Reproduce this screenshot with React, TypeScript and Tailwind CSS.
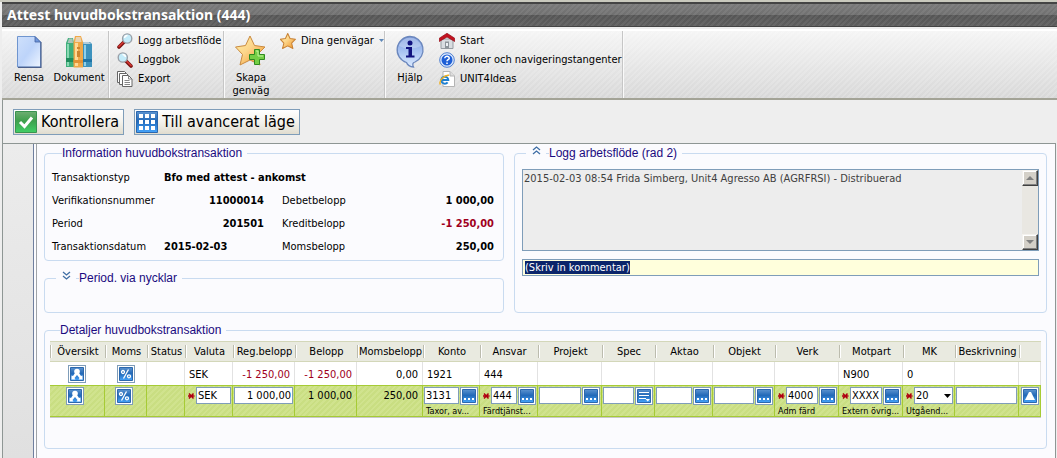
import { useEffect, useRef, type ReactNode } from "react";

/* ---------- Icons ---------- */

const PageIcon = () => (
  <svg width="26" height="34" viewBox="0 0 26 34">
    <defs>
      <linearGradient id="page" x1="0" y1="0" x2="1" y2="1">
        <stop offset="0" stopColor="#cfe0fb" />
        <stop offset="0.5" stopColor="#bdd4fa" />
        <stop offset="1" stopColor="#eef5ff" />
      </linearGradient>
    </defs>
    <path d="M1.5 1.5H19L24.500 7V32H1.500Z" fill="url(#page)" stroke="#6f95cf" />
    <path d="M2 32.300H25V7" fill="none" stroke="#4a5f8c" strokeWidth="1.200" />
    <path d="M19 1.500V7H24.500Z" fill="#6f97dc" stroke="#44639f" strokeWidth="0.800" />
  </svg>
);

const BooksIcon = () => (
  <svg width="28" height="34" viewBox="0 0 28 34">
    <path d="M1 8L3 3H8L9 8V32H1Z" fill="#3fae7c" />
    <path d="M2.500 8L4 3.500H7.500L8 8Z" fill="#a9c4ba" />
    <path d="M2 9H4V31H2Z" fill="#8ad9b3" />
    <path d="M1 23H9V27H1Z" fill="#1f8c5c" />
    <path d="M18 8L19 7H25L27 9V32H18Z" fill="#3d92bd" />
    <path d="M18 9L19 7H24L26 9Z" fill="#b5ccd8" />
    <path d="M19 10H21V31H19Z" fill="#8fd0ea" />
    <path d="M18 24H27V27H18Z" fill="#1f74a6" />
    <path d="M8.500 7L10 1H16L18 7V32.500H8.500Z" fill="#f0a848" />
    <path d="M10 7L11 2H15.500L16.500 7Z" fill="#e9d3b1" />
    <path d="M10 8H13V31H10Z" fill="#ffd995" />
    <path d="M12 12H15V14H12ZM12 16H15V22H12Z" fill="#cf8530" />
    <path d="M8.500 25H18V28H8.500Z" fill="#e29236" />
  </svg>
);

const LensIcon = ({ flipped = false }: { flipped?: boolean }) => (
  <svg width="16" height="16" viewBox="0 0 16 16">
    <g transform={flipped ? "translate(16 0) scale(-1 1)" : undefined}>
      <path d="M7 9L2 14" stroke="#7c1412" strokeWidth="3.600" strokeLinecap="round" />
      <path d="M6 9.500L2 13.500" stroke="#d83a34" strokeWidth="1.600" strokeLinecap="round" />
      <circle cx="10.200" cy="5.500" r="4.600" fill="#c4ecfa" stroke="#9aa0a8" strokeWidth="1.400" />
      <path d="M7.500 5A3 3 0 0 1 10.500 2.500" stroke="#fff" strokeWidth="1.500" fill="none" />
    </g>
  </svg>
);

const CopyIcon = () => (
  <svg width="16" height="16" viewBox="0 0 16 16" stroke="#666" fill="#fff">
    <path d="M0.500 0.500H7.500L9.500 2.500V11.500H0.500Z" />
    <path d="M2.500 2.500H9.500L11.500 4.500V13.500H2.500Z" />
    <path d="M5.500 4.500H11.500L15 8V15.500H5.500Z" />
    <path d="M11.500 4.500V8H15M7.500 9.500H12.500M7.500 11.500H13M7.500 13.500H13" stroke="#888" fill="none" />
  </svg>
);

const starPath = "M15 1L19.500 10.500L30 12L22.500 19.500L25 30L15 25L5 30L7.500 19.500L0.500 12L10.500 10.500Z";

const StarDefs = () => (
  <defs>
    <linearGradient id="star" x1="0" y1="0" x2="1" y2="1">
      <stop offset="0" stopColor="#fff0a8" />
      <stop offset="0.450" stopColor="#fcd58a" />
      <stop offset="1" stopColor="#ef8e1c" />
    </linearGradient>
  </defs>
);

const StarPlusIcon = () => (
  <svg width="32" height="32" viewBox="0 0 32 32">
    <StarDefs />
    <path d={starPath} fill="url(#star)" stroke="#c98a40" strokeLinejoin="round" />
    <path d="M19.500 14.500H24.500V19.500H29.500V24.500H24.500V29.500H19.500V24.500H14.500V19.500H19.500Z" fill="#74cf45" stroke="#2f8a20" />
    <path d="M21 16H23V21H28" stroke="#c2f59e" fill="none" />
  </svg>
);

const StarIcon = () => (
  <svg width="16" height="16" viewBox="0 0 31 31">
    <path d={starPath} fill="url(#star)" stroke="#c98235" strokeWidth="2" strokeLinejoin="round" />
  </svg>
);

const InfoIcon = () => (
  <svg width="30" height="34" viewBox="0 0 30 34">
    <defs>
      <linearGradient id="info" x1="0" y1="0" x2="0" y2="1">
        <stop offset="0" stopColor="#7d9bdd" />
        <stop offset="0.500" stopColor="#a9c4f2" />
        <stop offset="1" stopColor="#dcebff" />
      </linearGradient>
    </defs>
    <path d="M15 1.500A13.300 13.300 0 0 1 20 27Q16.500 28 18.500 32Q13 31.500 11.500 27.500A13.300 13.300 0 0 1 15 1.500Z" fill="url(#info)" stroke="#6b87bd" strokeWidth="1.300" />
    <path d="M4 11A11.500 11.500 0 0 1 26 11Q15 16 4 11Z" fill="#fff" opacity="0.250" />
    <circle cx="15" cy="8" r="2.500" fill="#11127f" />
    <path d="M11 12H17V20.500H19.500V22.500H11V20.500H13.500V14H11Z" fill="#11127f" />
  </svg>
);

const HouseIcon = () => (
  <svg width="16" height="16" viewBox="0 0 16 16">
    <path d="M2 6H14V15.500H2Z" fill="#d9dde1" stroke="#979da3" />
    <path d="M6 8.500H10V15.500H6Z" fill="#8e959b" />
    <path d="M7 10H9V13H7Z" fill="#eef2f5" />
    <path d="M8 0.300L15.700 5.200V8.500L8 4L0.300 8.500V5.200Z" fill="#c41220" stroke="#8f0b16" strokeWidth="0.700" />
  </svg>
);

const QuestionIcon = () => (
  <svg width="16" height="16" viewBox="0 0 16 16">
    <circle cx="8" cy="8" r="7.300" fill="#dce9fd" stroke="#4f7fd0" />
    <circle cx="8" cy="8" r="5.500" fill="#1e5fd6" />
    <path d="M5.800 6.300C5.800 3.500 10.500 3.700 10.200 6.300C10 7.700 8 7.700 8 9.300M8 10.500V12" stroke="#fff" strokeWidth="1.500" fill="none" />
  </svg>
);

const BrowserIcon = () => (
  <svg width="16" height="16" viewBox="0 0 16 16">
    <path d="M4 0.500H11L15.500 5V15.500H4Z" fill="#fff" stroke="#b4b4b4" />
    <path d="M11 0.500V5H15.500" fill="#ddd" stroke="#b4b4b4" />
    <path d="M2.500 9H9.300A3.500 3.500 0 1 0 8.600 11.300" stroke="#1c7fd0" strokeWidth="2" fill="none" />
    <path d="M1.500 13.500C-1 10 6 3.500 10 4.300" stroke="#f0b020" strokeWidth="1.400" fill="none" />
  </svg>
);

const CheckIcon = () => (
  <svg width="22" height="22" viewBox="0 0 22 22">
    <defs>
      <linearGradient id="check" x1="0" y1="0" x2="0" y2="1">
        <stop offset="0" stopColor="#6fae74" />
        <stop offset="0.450" stopColor="#3ea04c" />
        <stop offset="1" stopColor="#41cf66" />
      </linearGradient>
    </defs>
    <path d="M0.500 0.500H21.500V21.500H0.500Z" fill="url(#check)" stroke="#3a9350" />
    <path d="M5 11L9.500 15.500L17 6.500" stroke="#fff" strokeWidth="3" fill="none" />
  </svg>
);

const BlueDefs = () => (
  <defs>
    <linearGradient id="blue" x1="0" y1="0" x2="0" y2="1">
      <stop offset="0" stopColor="#5c93cf" />
      <stop offset="0.450" stopColor="#2269b8" />
      <stop offset="1" stopColor="#45a4fb" />
    </linearGradient>
  </defs>
);

const GridIcon = () => (
  <svg width="22" height="22" viewBox="0 0 22 22">
    <BlueDefs />
    <path d="M0.500 0.500H21.500V21.500H0.500Z" fill="url(#blue)" stroke="#2b66ad" />
    <path d="M3 3H7V7H3ZM9 3H13V7H9ZM15 3H19V7H15ZM3 9H7V13H3ZM9 9H13V13H9ZM15 9H19V13H15ZM3 15H7V19H3ZM9 15H13V19H9ZM15 15H19V19H15Z" fill="#fff" />
  </svg>
);

type Glyph = "people" | "percent" | "dots" | "list" | "up";

const glyphs: Record<Glyph, ReactNode> = {
  people: (
    <g fill="#fff">
      <circle cx="7" cy="4.500" r="2.800" />
      <path d="M5 6H9L11 9L12.500 8.500V12.500H8.500L9.500 11L7 8L4.500 11L5.500 12.500H1.500V8.500L3 9Z" />
    </g>
  ),
  percent: (
    <g stroke="#fff" strokeWidth="1.300" fill="none">
      <circle cx="4" cy="5" r="1.500" />
      <circle cx="10" cy="9.300" r="1.500" />
      <path d="M9.500 2.500L4.500 11.500" />
    </g>
  ),
  dots: <path d="M2 9H4V11H2ZM6 9H8V11H6ZM10 9H12V11H10Z" fill="#fff" />,
  list: <path d="M2 3H12V4H2ZM2 6H12V7H2ZM2 9H9V10H2ZM8.500 10H13L10.750 12.500Z" fill="#fff" />,
  up: <path d="M6 3H8L12 11H2Z" fill="#fff" />,
};

const DoubleChevron = ({ up = false }: { up?: boolean }) => (
  <svg width="9" height="9" viewBox="0 0 9 9" stroke="#3f6ea5" strokeWidth="1.300" fill="none">
    {up ? <path d="M1 4L4.500 1L8 4M1 8L4.500 5L8 8" /> : <path d="M1 1L4.500 4L8 1M1 5L4.500 8L8 5" />}
  </svg>
);

/* ---------- Building blocks ---------- */

function SmallButton({ glyph, label }: { glyph: Glyph; label: string }) {
  return (
    <button type="button" aria-label={label} className="block size-[18px] shrink-0 border border-[#7f9db9] bg-white p-px">
      <svg className="block size-[14px]" viewBox="0 0 14 14">
        <path d="M0.500 0.500H13.500V13.500H0.500Z" fill="url(#blue)" stroke="#2c68ad" />
        {glyphs[glyph]}
      </svg>
    </button>
  );
}

function RibbonGroup({ children, className = "" }: { children: ReactNode; className?: string }) {
  return (
    <div className={`flex items-start border-r border-[#c6c6c6] shadow-[1px_0_0_#fafafa] ${className}`}>{children}</div>
  );
}

function BigButton({ icon, children }: { icon: ReactNode; children: ReactNode }) {
  return (
    <button type="button" className="flex w-[50px] flex-col items-center pt-1 leading-[13px]">
      <span className="flex h-[36px] items-start">{icon}</span>
      {children}
    </button>
  );
}

function RibbonLink({ icon, children }: { icon: ReactNode; children: ReactNode }) {
  return (
    <a href="#" className="flex h-[19px] items-center gap-[5px] whitespace-nowrap">
      {icon}
      {children}
    </a>
  );
}

function ActionButton({ icon, children }: { icon: ReactNode; children: ReactNode }) {
  return (
    <button
      type="button"
      className="flex h-[26px] items-center gap-1 border border-[#7f9db9] bg-gradient-to-b from-white via-[#f4f2ec] to-[#e0dccf] pr-1 pl-px text-[16px] whitespace-nowrap"
    >
      {icon}
      {children}
    </button>
  );
}

function Panel({
  title,
  toggle,
  className = "",
  children,
}: {
  title: string;
  toggle?: "up" | "down";
  className?: string;
  children?: ReactNode;
}) {
  return (
    <fieldset className={`min-w-0 rounded-[4px] border border-[#c9dbf0] ${className}`}>
      <legend
        className={`h-[15px] pr-[5px] font-['Liberation_Sans',sans-serif] text-[12px] leading-[15px] text-[#1a0a80] ${toggle ? "ml-1" : "ml-[10px]"}`}
      >
        <span className="flex items-center">
          {toggle && (
            <>
              <button
                type="button"
                aria-label={toggle === "up" ? "Fäll ihop" : "Fäll ut"}
                className="flex h-[15px] w-5 items-start justify-center"
              >
                <DoubleChevron up={toggle === "up"} />
              </button>
              <span className="h-px w-[3px] bg-[#c9dbf0]" />
            </>
          )}
          {title}
        </span>
      </legend>
      {children}
    </fieldset>
  );
}

const Value = ({ children, negative = false }: { children: ReactNode; negative?: boolean }) => (
  <output className={`text-right font-bold ${negative ? "text-[#a0001c]" : ""}`}>{children}</output>
);

/* ---------- Detail table ---------- */

type Column = {
  name: string;
  col: string;
  first?: string;
  negative?: boolean;
  number?: boolean;
  value?: string;
  kind: "icon" | "empty" | "text" | "input" | "select" | "end";
  glyph?: Glyph;
  required?: boolean;
  note?: string;
};

const columns: Column[] = [
  { name: "Översikt", col: "w-[55px]", kind: "icon", glyph: "people" },
  { name: "Moms", col: "w-[42px]", kind: "icon", glyph: "percent" },
  { name: "Status", col: "w-[38px]", kind: "empty" },
  { name: "Valuta", col: "w-[48px]", first: "SEK", kind: "input", value: "SEK", required: true },
  { name: "Reg.belopp", col: "w-[62px]", first: "-1 250,00", negative: true, number: true, kind: "input", value: "1 000,00" },
  { name: "Belopp", col: "w-[62px]", first: "-1 250,00", negative: true, number: true, kind: "text", value: "1 000,00" },
  { name: "Momsbelopp", col: "w-[66px]", first: "0,00", number: true, kind: "text", value: "250,00" },
  { name: "Konto", col: "w-[57px]", first: "1921", kind: "input", value: "3131", glyph: "dots", note: "Taxor, av..." },
  { name: "Ansvar", col: "w-[58px]", first: "444", kind: "input", value: "444", glyph: "dots", required: true, note: "Färdtjänst..." },
  { name: "Projekt", col: "w-[64px]", kind: "input", glyph: "dots" },
  { name: "Spec", col: "w-[53px]", kind: "input", glyph: "list" },
  { name: "Aktao", col: "w-[58px]", kind: "input", glyph: "dots" },
  { name: "Objekt", col: "w-[62px]", kind: "input", glyph: "dots" },
  { name: "Verk", col: "w-[64px]", kind: "input", value: "4000", glyph: "dots", required: true, note: "Adm färd" },
  { name: "Motpart", col: "w-[64px]", first: "N900", kind: "input", value: "XXXX", glyph: "dots", required: true, note: "Extern övrig..." },
  { name: "MK", col: "w-[52px]", first: "0", kind: "select", value: "20", required: true, note: "Utgåend..." },
  { name: "Beskrivning", col: "w-[64px]", kind: "input" },
  { name: "", col: "w-[22px]", kind: "end", glyph: "up" },
];

const Required = () => (
  <svg className="w-[9px] shrink-0 self-center" height="8" viewBox="0 0 9 8" stroke="#b00010" strokeWidth="1.500">
    <path d="M2 4H8.500M3 1.500L7.500 6.500M7.500 1.500L3 6.500" />
  </svg>
);

function EditCell({ column }: { column: Column }) {
  const { kind, glyph, name, value = "", number } = column;
  if (kind === "icon") {
    return (
      <div className="flex justify-center pr-1">
        <SmallButton glyph={glyph!} label={name} />
      </div>
    );
  }
  if (kind === "end") {
    return (
      <div className="flex justify-center">
        <SmallButton glyph="up" label="Stäng rad" />
      </div>
    );
  }
  if (kind === "empty") return null;
  if (kind === "text") return <div className="pr-1 text-right leading-[18px]">{value}</div>;
  return (
    <>
      <div className="flex h-[18px] items-start gap-px px-px">
        {column.required && <Required />}
        {kind === "select" ? (
          <span className="relative min-w-0 flex-1">
            <select
              aria-label={name}
              className="block h-[17px] w-full appearance-none border border-[#7f9db9] bg-white pl-px leading-[15px]"
            >
              <option>{value}</option>
            </select>
            <svg className="pointer-events-none absolute top-[7px] right-[2px]" width="7" height="4" viewBox="0 0 7 4">
              <path d="M0 0H7L3.500 4Z" />
            </svg>
          </span>
        ) : (
          <input
            aria-label={name}
            defaultValue={value}
            className={`block h-[17px] min-w-0 flex-1 rounded-none border border-[#7f9db9] bg-white px-px leading-[15px] ${number ? "text-right" : ""}`}
          />
        )}
        {glyph && <SmallButton glyph={glyph} label={`Sök ${name}`} />}
      </div>
      {column.note && <div className="pl-[3px] text-[9px] leading-[12px] whitespace-nowrap">{column.note}</div>}
    </>
  );
}

function DetailTable() {
  return (
    <table className="w-full table-fixed border-collapse shadow-[0_1px_0_#c8c8c8]">
      <colgroup>
        {columns.map((c) => (
          <col key={c.name} className={c.col} />
        ))}
      </colgroup>
      <thead>
        <tr className="h-[21px] bg-[#e9eae0] shadow-[inset_0_1px_0_#d3d7b9,inset_0_-1px_0_#d3d7b9]">
          {columns.map((c) => (
            <th key={c.name} scope="col" className="p-0 font-normal">
              <div className="flex h-[13px] items-center justify-center border-l border-[#bcbcae] leading-[13px] whitespace-nowrap shadow-[inset_1px_0_0_#fff]">
                {c.name}
              </div>
            </th>
          ))}
        </tr>
      </thead>
      <tbody>
        <tr className="h-[23px] bg-white">
          {columns.map((c) => (
            <td
              key={c.name}
              className={`p-0 pt-px pr-[5px] pl-1 shadow-[inset_-1px_0_0_#e2e2e2] ${c.number ? "text-right" : ""} ${c.negative ? "text-[#a0001c]" : ""}`}
            >
              {c.kind === "icon" ? (
                <div className="flex justify-center">
                  <SmallButton glyph={c.glyph!} label={c.name} />
                </div>
              ) : (
                c.first
              )}
            </td>
          ))}
        </tr>
        <tr className="h-[32px] bg-[repeating-linear-gradient(135deg,#d0e38e_0px,#d0e38e_2px,#c9de82_2px,#c9de82_4px)]">
          {columns.map((c) => (
            <td
              key={c.name}
              className="p-0 pt-[2px] pr-px align-top shadow-[inset_-1px_0_0_#a6cb35,inset_0_1px_0_#a6cb35,inset_0_-1px_0_#a6cb35]"
            >
              <EditCell column={c} />
            </td>
          ))}
        </tr>
      </tbody>
    </table>
  );
}

/* ---------- Workflow log ---------- */

function ScrollButton({ down = false }: { down?: boolean }) {
  return (
    <button
      type="button"
      aria-label={down ? "Rulla ned" : "Rulla upp"}
      className="flex size-4 items-center justify-center border border-t-[#f4f2ee] border-r-[#404040] border-b-[#404040] border-l-[#f4f2ee] bg-[#d4d0c8] shadow-[inset_-1px_-1px_0_#808080,inset_1px_1px_0_#fff]"
    >
      <svg width="8" height="5" viewBox="0 0 8 5" fill="#808080">
        {down ? <path d="M0 0H8L4 4Z" /> : <path d="M4 0L8 4H0Z" />}
      </svg>
    </button>
  );
}

function WorkflowLog() {
  const comment = useRef<HTMLInputElement>(null);
  useEffect(() => {
    comment.current?.focus();
    comment.current?.select();
  }, []);
  return (
    <div className="flex flex-col gap-2 pt-2">
      <div className="flex h-[82px] border border-[#7f9db9] bg-[#ededed]">
        <textarea
          readOnly
          aria-label="Logg arbetsflöde"
          className="min-w-0 flex-1 resize-none overflow-hidden px-px pt-[2px] leading-[13px] text-[#404040] outline-none"
          defaultValue="2015-02-03 08:54 Frida Simberg, Unit4 Agresso AB (AGRFRSI) - Distribuerad"
        />
        <div className="flex w-4 flex-col justify-between bg-[#e9e7e2]">
          <ScrollButton />
          <ScrollButton down />
        </div>
      </div>
      <input
        ref={comment}
        aria-label="Kommentar"
        defaultValue="(Skriv in kommentar)"
        className="h-[17px] w-full border border-[#7f9db9] bg-[#ffffdc] px-[2px] leading-[13px] outline-none selection:bg-[#0a246a] selection:text-white"
      />
    </div>
  );
}

/* ---------- Page ---------- */

export default function App() {
  return (
    <div className="flex min-h-screen flex-col bg-[#eeeeee] font-['DejaVu_Sans_Condensed','DejaVu_Sans',sans-serif] text-[11px] leading-[13px] text-black">
      <header>
        <div className="h-[2px] bg-[#c9c9bd]" />
        <h1 className="ml-[2px] flex h-[25px] items-center border-t-2 border-b border-[#444] bg-[repeating-linear-gradient(135deg,#ffffff10_0px,#ffffff10_2px,transparent_2px,transparent_4px),linear-gradient(#7a7a7a_0%,#707070_50%,#555555_50%,#5e5e5e_100%)] px-[5px] pb-[2px] font-['Noto_Sans',sans-serif] text-[14px] font-bold text-white">
          Attest huvudbokstransaktion (444)
        </h1>
        <nav className="mt-[2px] ml-[2px] flex h-[71px] border-t-2 border-b-2 border-t-white border-b-[#a3a396] bg-[repeating-linear-gradient(135deg,#ffffff28_0px,#ffffff28_2px,transparent_2px,transparent_4px),linear-gradient(#f5f5f5,#d8d8d8)]">
          <RibbonGroup className="w-[107px] pl-[2px]">
            <BigButton icon={<PageIcon />}>Rensa</BigButton>
            <BigButton icon={<BooksIcon />}>Dokument</BigButton>
          </RibbonGroup>
          <RibbonGroup className="w-[115px] pl-2">
            <div className="flex flex-col">
              <RibbonLink icon={<LensIcon />}>Logg arbetsflöde</RibbonLink>
              <RibbonLink icon={<LensIcon flipped />}>Loggbok</RibbonLink>
              <RibbonLink icon={<CopyIcon />}>Export</RibbonLink>
            </div>
          </RibbonGroup>
          <RibbonGroup className="w-[161px] gap-1 pl-[2px]">
            <BigButton icon={<StarPlusIcon />}>
              Skapa
              <br />
              genväg
            </BigButton>
            <button type="button" className="flex h-[19px] items-center gap-[5px] whitespace-nowrap">
              <StarIcon />
              Dina genvägar
              <svg width="5" height="3" viewBox="0 0 5 3" fill="#5f88b8">
                <path d="M0 0H5L2.500 3Z" />
              </svg>
            </button>
          </RibbonGroup>
          <RibbonGroup>
            <BigButton icon={<InfoIcon />}>Hjälp</BigButton>
            <div className="flex flex-col pl-1">
              <RibbonLink icon={<HouseIcon />}>Start</RibbonLink>
              <RibbonLink icon={<QuestionIcon />}>Ikoner och navigeringstangenter</RibbonLink>
              <RibbonLink icon={<BrowserIcon />}>UNIT4Ideas</RibbonLink>
            </div>
          </RibbonGroup>
        </nav>
      </header>

      <div className="mr-px ml-[2px] flex flex-1 flex-col border-l border-[#8e9694]">
        <div className="flex h-[44px] items-center gap-[10px] border-b border-[#8e9694] pl-[10px]">
          <ActionButton icon={<CheckIcon />}>Kontrollera</ActionButton>
          <ActionButton icon={<GridIcon />}>Till avancerat läge</ActionButton>
        </div>

        <div className="flex flex-1">
          <aside className="w-[30px] shrink-0 bg-gradient-to-b from-[#ececec] to-[#e0e0e0]" />
          <main className="flex min-w-0 flex-1 flex-col gap-[10px] border-r border-l border-r-[#8e9694] border-l-[#6f7f9f] bg-[#fbfbfe] pt-[2px] pr-2 pb-2 pl-[10px] shadow-[inset_2px_0_0_#fbfbfe,inset_3px_0_0_#a0a4a8]">
            <div className="grid grid-cols-[460fr_533fr] gap-[10px]">
              <div className="flex flex-col gap-[10px]">
                <Panel title="Information huvudbokstransaktion" className="px-[7px] pb-[2px]">
                  <div className="grid auto-rows-[23px] grid-cols-[112fr_100fr_18px_80fr_132fr] items-center pt-[5px] pr-[2px]">
                    <span>Transaktionstyp</span>
                    <output className="col-span-4 font-bold">Bfo med attest - ankomst</output>
                    <span>Verifikationsnummer</span>
                    <Value>11000014</Value>
                    <span />
                    <span>Debetbelopp</span>
                    <Value>1 000,00</Value>
                    <span>Period</span>
                    <Value>201501</Value>
                    <span />
                    <span>Kreditbelopp</span>
                    <Value negative>-1 250,00</Value>
                    <span>Transaktionsdatum</span>
                    <output className="font-bold">2015-02-03</output>
                    <span />
                    <span>Momsbelopp</span>
                    <Value>250,00</Value>
                  </div>
                </Panel>
                <Panel title="Period. via nycklar" toggle="down" className="flex-1 px-[7px]" />
              </div>
              <Panel title="Logg arbetsflöde (rad 2)" toggle="up" className="px-[7px] pb-9">
                <WorkflowLog />
              </Panel>
            </div>
            <Panel title="Detaljer huvudbokstransaktion" className="px-[5px] pt-[3px] pb-[31px]">
              <DetailTable />
            </Panel>
          </main>
        </div>
      </div>
    </div>
  );
}
